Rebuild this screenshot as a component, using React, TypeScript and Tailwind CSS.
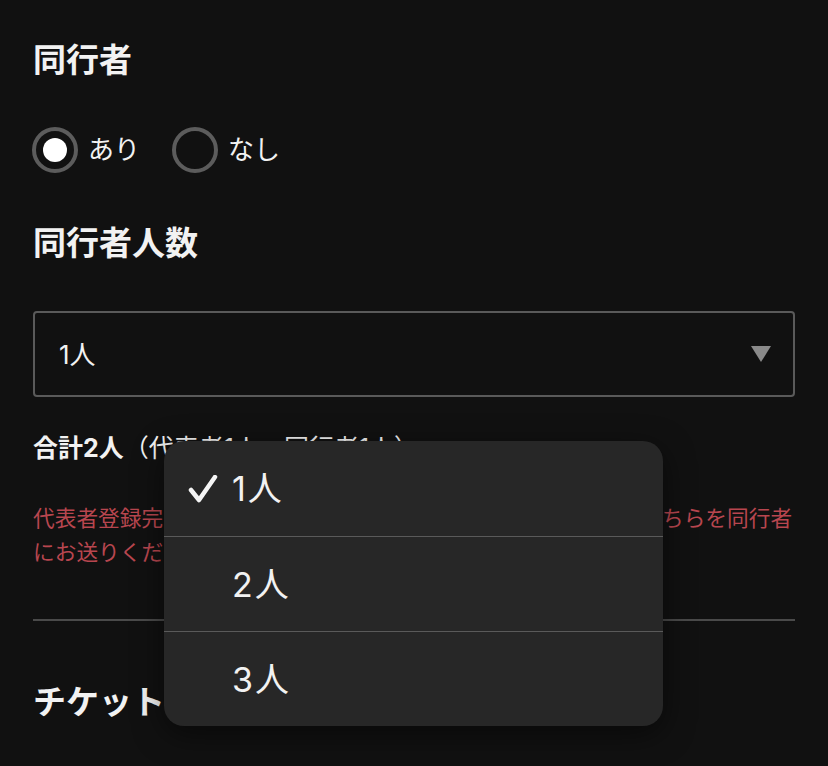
import { useState } from 'react'

const FONT = "font-['Inter','Noto_Sans_CJK_JP',sans-serif]"

const OPTIONS = ['1人', '2人', '3人']

function Radio({ checked, label }: { checked: boolean; label: string }) {
  return (
    <div className="flex items-center gap-[10px]">
      <div className="flex h-[46px] w-[46px] items-center justify-center rounded-full border-[4px] border-[#5c5c5c]">
        {checked && <div className="h-[24px] w-[24px] rounded-full bg-white" />}
      </div>
      <span className="text-[26px] leading-none text-[#f2f2f2]">{label}</span>
    </div>
  )
}

export default function App() {
  const [count] = useState(0)

  return (
    <div className={`relative h-[766px] w-[828px] overflow-hidden bg-[#111111] ${FONT}`}>
      <div className="px-[33px]">
        {/* companion yes / no */}
        <h2 className="mt-[38px] h-[44px] text-[33px] font-bold leading-[44px] text-[#f2f2f2]">同行者</h2>
        <div className="mt-[45px] flex items-center gap-[32px] -ml-px">
          <Radio checked label="あり" />
          <Radio checked={false} label="なし" />
        </div>

        {/* companion count */}
        <h2 className="mt-[48px] h-[44px] text-[33px] font-bold leading-[44px] text-[#f2f2f2]">同行者人数</h2>
        <div className="mt-[46px] flex h-[86px] items-center justify-between rounded-[4px] border-2 border-[#5a5a5a] pl-[24px] pr-[22px]">
          <span className="text-[26px] text-[#f2f2f2]">{OPTIONS[count]}</span>
          <svg width="20" height="16" viewBox="0 0 20 16">
            <path d="M0 0 L20 0 L10 16 Z" fill="#8a8a8a" />
          </svg>
        </div>

        <div className="mt-[36px] h-[30px] text-[25px] leading-[30px] text-[#f2f2f2]">
          <span className="font-bold">合計2人</span>（代表者1人、同行者1人）
        </div>

        <p className="mt-[38px] text-[21.7px] leading-[34px] text-[#b8464f]">
          代表者登録完了後に同行者用の登録リンクが発行されますのでこちらを同行者にお送りください。
        </p>

        <div className="mt-[50px] h-[2px] bg-[#4a4a4a]" />

        <h2 className="mt-[59px] h-[44px] text-[33px] font-bold leading-[44px] text-[#f2f2f2]">チケット種別</h2>
      </div>

      {/* open select menu */}
      <div className="absolute left-[164px] top-[441px] w-[499px] overflow-hidden rounded-[20px] bg-[#272727] shadow-[0_8px_30px_rgba(0,0,0,0.5)]">
        {OPTIONS.map((opt, i) => (
          <div
            key={opt}
            className={`relative flex h-[95px] items-center pl-[68px] ${i > 0 ? 'border-t border-[#5a5a5a]' : ''}`}
          >
            {i === count && (
              <svg className="absolute left-[24px] top-[34px]" width="30" height="28" viewBox="0 0 30 28">
                <path d="M3 15 L11 25 L27 2" fill="none" stroke="#f5f5f5" strokeWidth="4.5" strokeLinecap="round" strokeLinejoin="round" />
              </svg>
            )}
            <span className="text-[34px] tracking-[2px] text-[#f2f2f2]">{opt}</span>
          </div>
        ))}
      </div>
    </div>
  )
}
